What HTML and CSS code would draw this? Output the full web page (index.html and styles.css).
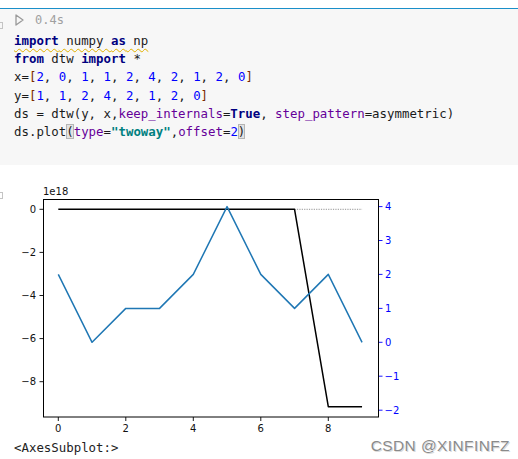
FILE: index.html
```html
<!DOCTYPE html>
<html>
<head>
<meta charset="utf-8">
<link rel="stylesheet" href="styles.css">
</head>
<body>
<div class="page">
  <div class="top-gap"></div>
  <div class="cell">
    <span class="edge-icon edge-top"></span>
    <div class="status">
      <svg class="run" width="9" height="12" viewBox="0 0 9 12"><polygon points="1,1 8,6 1,11" fill="none" stroke="#9a9a9a" stroke-width="1.3" stroke-linejoin="round"/></svg>
      <span class="time">0.4s</span>
    </div>
    <div class="code">
      <div class="line"><span class="warn"><span class="kw">import</span> numpy <span class="kw">as</span> np</span></div>
      <div class="line"><span class="kw">from</span> dtw <span class="kw">import</span> *</div>
      <div class="line">x=<span class="br">[</span><span class="num">2</span>, <span class="num">0</span>, <span class="num">1</span>, <span class="num">1</span>, <span class="num">2</span>, <span class="num">4</span>, <span class="num">2</span>, <span class="num">1</span>, <span class="num">2</span>, <span class="num">0</span><span class="br">]</span></div>
      <div class="line">y=<span class="br">[</span><span class="num">1</span>, <span class="num">1</span>, <span class="num">2</span>, <span class="num">4</span>, <span class="num">2</span>, <span class="num">1</span>, <span class="num">2</span>, <span class="num">0</span><span class="br">]</span></div>
      <div class="line">ds = dtw(y, x,<span class="arg">keep_internals</span>=<span class="kw">True</span>, <span class="arg">step_pattern</span>=asymmetric)</div>
      <div class="line">ds.plot<span class="match">(</span><span class="arg">type</span>=<span class="str">"twoway"</span>,<span class="arg">offset</span>=<span class="num">2</span><span class="match">)</span></div>
    </div>
  </div>
  <div class="output">
    <span class="edge-icon edge-out"></span>
    <svg class="plot" width="400" height="263" viewBox="0 176 400 263">
      <g font-family="DejaVu Sans, sans-serif" font-size="10">
        <text x="43" y="194.5" fill="#111">1e18</text>
        <g stroke="#000" stroke-width="0.9">
          <line x1="39.5" y1="209.3" x2="43.5" y2="209.3"/>
          <line x1="39.5" y1="252.4" x2="43.5" y2="252.4"/>
          <line x1="39.5" y1="295.5" x2="43.5" y2="295.5"/>
          <line x1="39.5" y1="338.6" x2="43.5" y2="338.6"/>
          <line x1="39.5" y1="381.7" x2="43.5" y2="381.7"/>
          <line x1="58.3" y1="417" x2="58.3" y2="421"/>
          <line x1="125.8" y1="417" x2="125.8" y2="421"/>
          <line x1="193.3" y1="417" x2="193.3" y2="421"/>
          <line x1="260.8" y1="417" x2="260.8" y2="421"/>
          <line x1="328.3" y1="417" x2="328.3" y2="421"/>
        </g>
        <g fill="#111" text-anchor="end">
          <text x="36" y="212.8">0</text>
          <text x="36" y="255.9">−2</text>
          <text x="36" y="299">−4</text>
          <text x="36" y="342.1">−6</text>
          <text x="36" y="385.2">−8</text>
        </g>
        <g fill="#111" text-anchor="middle">
          <text x="58.3" y="432">0</text>
          <text x="125.8" y="432">2</text>
          <text x="193.3" y="432">4</text>
          <text x="260.8" y="432">6</text>
          <text x="328.3" y="432">8</text>
        </g>
        <g stroke="#0000ff" stroke-width="0.9">
          <line x1="378.5" y1="206.6" x2="382.5" y2="206.6"/>
          <line x1="378.5" y1="240.5" x2="382.5" y2="240.5"/>
          <line x1="378.5" y1="274.4" x2="382.5" y2="274.4"/>
          <line x1="378.5" y1="308.4" x2="382.5" y2="308.4"/>
          <line x1="378.5" y1="342.3" x2="382.5" y2="342.3"/>
          <line x1="378.5" y1="376.2" x2="382.5" y2="376.2"/>
          <line x1="378.5" y1="410.2" x2="382.5" y2="410.2"/>
        </g>
        <g fill="#0000ff">
          <text x="385" y="210.1">4</text>
          <text x="385" y="244">3</text>
          <text x="385" y="277.9">2</text>
          <text x="385" y="311.9">1</text>
          <text x="385" y="345.8">0</text>
          <text x="384.5" y="379.7">−1</text>
          <text x="384.5" y="413.7">−2</text>
        </g>
      </g>
      <line x1="294.55" y1="209.3" x2="362.05" y2="209.3" stroke="#777" stroke-width="0.8" stroke-dasharray="1.2,1.2"/>
      <polyline fill="none" stroke="#000" stroke-width="1.5" stroke-linejoin="round" points="58.3,209.3 294.55,209.3 328.3,406.7 362.05,406.7"/>
      <polyline fill="none" stroke="#1f77b4" stroke-width="1.5" stroke-linejoin="round" points="58.3,274.4 92.05,342.3 125.8,308.4 159.55,308.4 193.3,274.4 227.05,206.6 260.8,274.4 294.55,308.4 328.3,274.4 362.05,342.3"/>
      <rect x="43.5" y="199.5" width="335" height="217.5" fill="none" stroke="#000" stroke-width="1"/>
    </svg>
    <div class="repr">&lt;AxesSubplot:&gt;</div>
    <span class="edge-icon edge-repr"></span>
    <div class="watermark">CSDN @XINFINFZ</div>
  </div>
</div>
</body>
</html>
```

FILE: styles.css
```css
html, body {
  margin: 0;
  padding: 0;
  background: #ffffff;
}

.page {
  width: 518px;
  height: 459px;
  overflow: hidden;
  position: relative;
}

.top-gap {
  height: 8px;
  background: #ffffff;
  border-bottom: 1px solid #1a8fc9;
}

.cell {
  position: relative;
  background: #f7f7f7;
  height: 156px;
  box-sizing: border-box;
  padding: 2px 0 0 14px;
}

.status {
  display: flex;
  align-items: center;
  height: 18px;
  gap: 11px;
  padding-left: 1px;
}

.run {
  display: block;
}

.time {
  font-family: "DejaVu Sans Mono", monospace;
  font-size: 12px;
  color: #a0a0a0;
}

.code {
  margin-top: 3px;
  font-family: "DejaVu Sans Mono", monospace;
  font-size: 12.4px;
  color: #1a1a1a;
}

.line {
  height: 18.2px;
  line-height: 18.2px;
  white-space: pre;
}

.kw {
  color: #000080;
  font-weight: bold;
}

.num {
  color: #0000ff;
}

.str {
  color: #008080;
  font-weight: bold;
}

.arg {
  color: #660099;
}

.br {
  color: #7a2a00;
}

.match {
  background: #e2e2e2;
  outline: 1px solid #b5b5b5;
  outline-offset: -1px;
}

.warn {
  text-decoration: underline wavy #e0b000;
  text-decoration-thickness: 1px;
  text-underline-offset: 3px;
}

.output {
  position: relative;
  height: 294px;
}

.plot {
  display: block;
  margin-top: 11px;
}

.repr {
  font-family: "DejaVu Sans Mono", monospace;
  font-size: 12.4px;
  line-height: 18px;
  color: #222;
  padding-left: 14px;
}

.edge-icon {
  position: absolute;
  left: -4px;
  width: 5px;
  height: 5px;
  border: 1px solid #c4c4c4;
}

.edge-top {
  top: 13px;
}

.edge-out {
  top: 16px;
}

.edge-repr {
  top: 287px;
}

.watermark {
  position: absolute;
  right: 8px;
  top: 261px;
  font-family: "Liberation Sans", Arial, sans-serif;
  font-size: 15.5px;
  line-height: 18px;
  color: #8a8a8a;
  text-shadow: 0 0 1px #ffffff, 1px 1px 0 #d8d8d8;
  letter-spacing: 0.4px;
}
```
